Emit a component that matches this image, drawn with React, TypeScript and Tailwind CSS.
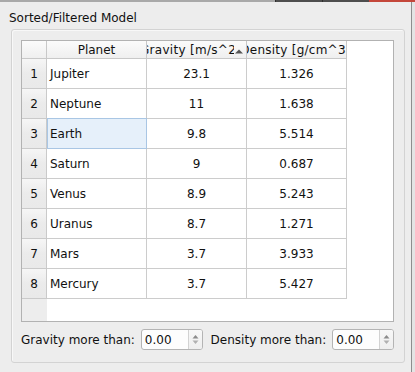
import React from "react";

const rows = [
  ["Jupiter", "23.1", "1.326"],
  ["Neptune", "11", "1.638"],
  ["Earth", "9.8", "5.514"],
  ["Saturn", "9", "0.687"],
  ["Venus", "8.9", "5.243"],
  ["Uranus", "8.7", "1.271"],
  ["Mars", "3.7", "3.933"],
  ["Mercury", "3.7", "5.427"],
];

function SpinBox() {
  return (
    <div className="flex-1 flex h-[21px] border border-[#b4b4b4] rounded-[3px] bg-[#fdfdfd] overflow-hidden">
      <div className="flex-1 flex items-center pl-[3px]">0.00</div>
      <div className="w-[14px] border-l border-[#d2d2d2] bg-gradient-to-b from-[#f8f8f8] to-[#eeeeee] flex items-center justify-center">
        <svg width="7" height="11" viewBox="0 0 7 11">
          <polygon points="0.5,4.5 3.5,1 6.5,4.5" fill="#8c8c8c" />
          <polygon points="0.5,6.5 3.5,10 6.5,6.5" fill="#b0b0b0" />
        </svg>
      </div>
    </div>
  );
}

export default function App() {
  return (
    <div className="w-[415px] h-[372px] bg-[#ededed] flex flex-col overflow-hidden font-['DejaVu_Sans',sans-serif] text-[12px] text-[#111]">
      <div className="flex h-[2px] shrink-0">
        <div className="w-[275px] bg-[#a9a9a9]" />
        <div className="w-[47px] bg-[#4e4e4e] border-l border-[#2e2e2e]" />
        <div className="w-[47px] bg-[#4e4e4e] border-l border-[#2e2e2e]" />
        <div className="flex-1 bg-[#c4473a]" />
      </div>
      <div className="flex flex-1">
        <div className="w-[411px] flex flex-col pt-[9px]">
          <div className="h-[14px] leading-[14px] pl-[9px] whitespace-nowrap">Sorted/Filtered Model</div>
          <div className="mt-[4px] ml-[11px] w-[394px] h-[334px] border border-[#d3d3d3] rounded-[3px] shadow-[inset_1px_1px_0_#f8f8f8] pl-[9px] pt-[10px] flex flex-col">
            <div className="w-[373px] h-[282px] border border-[#b2b2b2] bg-white flex flex-col">
              <div className="flex h-[18px] shrink-0">
                <div className="w-[25px] border-r border-b border-[#c8c8c8] bg-gradient-to-b from-[#fbfbfb] to-[#efefef]" />
                <div className="w-[100px] border-r border-b border-[#c8c8c8] bg-gradient-to-b from-[#fbfbfb] to-[#efefef] flex items-center justify-center overflow-hidden whitespace-nowrap">
                  Planet
                </div>
                <div className="w-[100px] border-r border-b border-[#c8c8c8] bg-gradient-to-b from-[#fbfbfb] to-[#efefef] flex items-center overflow-hidden">
                  <div className="w-[87px] flex justify-center overflow-hidden whitespace-nowrap">
                    <span className="shrink-0 tracking-[0.3px]">Gravity [m/s^2]</span>
                  </div>
                  <svg width="8" height="5" viewBox="0 0 8 5" className="mt-[3px] ml-[1px]">
                    <polygon points="0,4.5 4,0.5 8,4.5" fill="#555" />
                  </svg>
                </div>
                <div className="w-[100px] border-r border-b border-[#c8c8c8] bg-gradient-to-b from-[#fbfbfb] to-[#efefef] flex items-center justify-center overflow-hidden whitespace-nowrap">
                  <span className="shrink-0 tracking-[0.25px] translate-x-[-1px]">Density [g/cm^3]</span>
                </div>
                <div className="flex-1" />
              </div>
              {rows.map((r, i) => (
                <div key={i} className="flex h-[30px] shrink-0">
                  <div className="w-[25px] border-r border-b border-[#cacaca] bg-gradient-to-b from-[#f6f6f6] via-[#ebebeb] to-[#e9e9e9] flex items-center justify-center">
                    {i + 1}
                  </div>
                  <div className="relative w-[100px] border-r border-b border-[#cccccc] flex items-center pl-[3px]">
                    {i === 2 && (
                      <div className="absolute -top-px left-0 -right-px -bottom-px bg-[#e6f0fa] border border-[#a9c6e4]" />
                    )}
                    <span className="relative">{r[0]}</span>
                  </div>
                  <div className="w-[100px] border-r border-b border-[#cccccc] flex items-center justify-center">{r[1]}</div>
                  <div className="w-[100px] border-r border-b border-[#cccccc] flex items-center justify-center">{r[2]}</div>
                  <div className="flex-1" />
                </div>
              ))}
              <div className="flex flex-1">
                <div className="w-[25px] bg-[#ededed]" />
                <div className="flex-1" />
              </div>
            </div>
            <div className="w-[373px] mt-[7px] flex items-center gap-[6px] whitespace-nowrap">
              <span>Gravity more than:</span>
              <SpinBox />
              <span className="ml-[2px]">Density more than:</span>
              <SpinBox />
            </div>
          </div>
        </div>
        <div className="w-[1px] bg-[#8e8e8e]" />
        <div className="flex-1 bg-[#e4e4e4]" />
      </div>
    </div>
  );
}
